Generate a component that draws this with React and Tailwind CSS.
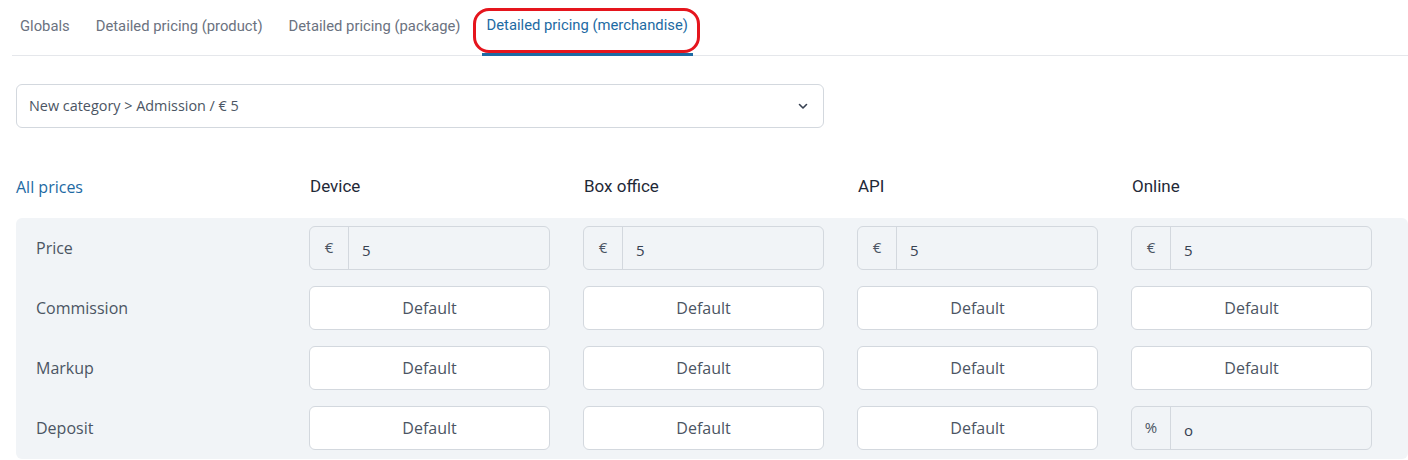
import React from "react";

const cols = ["Device", "Box office", "API", "Online"];

function AddonInput({ addon, value }) {
  return (
    <div className="flex h-[44px] w-[241px] rounded-[6px] border border-[#d3d8de] bg-[#f1f4f7] overflow-hidden">
      <div className="flex w-[39px] items-start justify-center border-r border-[#d3d8de] pt-[9px] text-[15px] text-[#4b5563]">{addon}</div>
      <div className="flex items-center pl-[13px] pt-[4px] text-[15px] text-[#374151]">{value}</div>
    </div>
  );
}

function DefaultBox() {
  return (
    <div className="flex h-[44px] w-[241px] items-center justify-center rounded-[6px] border border-[#d3d8de] bg-white text-[16px] text-[#4b5563]">
      Default
    </div>
  );
}

export default function App() {
  const rows = [
    { label: "Price", cells: [0, 1, 2, 3].map(() => ({ t: "addon", a: "€", v: "5" })) },
    { label: "Commission", cells: [0, 1, 2, 3].map(() => ({ t: "def" })) },
    { label: "Markup", cells: [0, 1, 2, 3].map(() => ({ t: "def" })) },
    { label: "Deposit", cells: [{ t: "def" }, { t: "def" }, { t: "def" }, { t: "addon", a: "%", v: "o" }] },
  ];
  const body = { fontFamily: "'Open Sans', 'Noto Sans', sans-serif" };
  const tabFont = { fontFamily: "Roboto, 'Noto Sans', sans-serif" };
  return (
    <div className="w-[1408px] h-[460px] bg-white overflow-hidden" style={body}>
      <div className="flex h-[56px] items-stretch border-b border-[#e5e7eb] ml-[12px] pl-[3px] gap-[16px]" style={tabFont}>
        {["Globals", "Detailed pricing (product)", "Detailed pricing (package)"].map((t) => (
          <div key={t} className="flex items-center px-[5px] pb-[2px] text-[14.8px] text-[#6b7280]">{t}</div>
        ))}
        <div className="relative flex items-center px-[5px] pb-[2px] text-[14.8px] text-[#1d6aa3] border-b-[3px] border-[#1d6aa3] mb-[-1px]">
          Detailed pricing (merchandise)
          <div className="absolute left-[-9px] right-[-7px] top-[8px] h-[45px] rounded-[16px] border-[3px] border-[#e5151d]"></div>
        </div>
      </div>

      <div className="pl-[16px] pt-[28px]">
        <div className="flex h-[44px] w-[808px] items-center justify-between rounded-[6px] border border-[#d3d8de] bg-white pl-[12px] pr-[14px]">
          <span className="text-[14.4px] text-[#4b5563]">New category &gt; Admission / € 5</span>
          <svg width="12" height="12" viewBox="0 0 12 12" fill="none" stroke="#374151" strokeWidth="1.6" strokeLinecap="round" strokeLinejoin="round">
            <path d="M2.5 4.5 L6 8 L9.5 4.5" />
          </svg>
        </div>
      </div>

      <div className="pl-[16px] pt-[38px]">
        <div className="grid grid-cols-[260px_241px_241px_241px_241px] gap-x-[33px] h-[42px] items-center">
          <div className="text-[16px] text-[#1d6aa3]">All prices</div>
          {cols.map((c) => (
            <div key={c} className="pl-[1px] text-[17px] font-normal text-[#1f2937]" style={tabFont}>{c}</div>
          ))}
        </div>
        <div className="mt-[10px] rounded-[6px] bg-[#f1f4f7] pt-[8px] pb-[9px] flex flex-col gap-[16px]">
          {rows.map((r) => (
            <div key={r.label} className="grid grid-cols-[260px_241px_241px_241px_241px] gap-x-[33px] items-center">
              <div className="pl-[20px] text-[16px] text-[#4b5563]">{r.label}</div>
              {r.cells.map((c, i) =>
                c.t === "addon" ? <AddonInput key={i} addon={c.a} value={c.v} /> : <DefaultBox key={i} />
              )}
            </div>
          ))}
        </div>
      </div>
    </div>
  );
}
